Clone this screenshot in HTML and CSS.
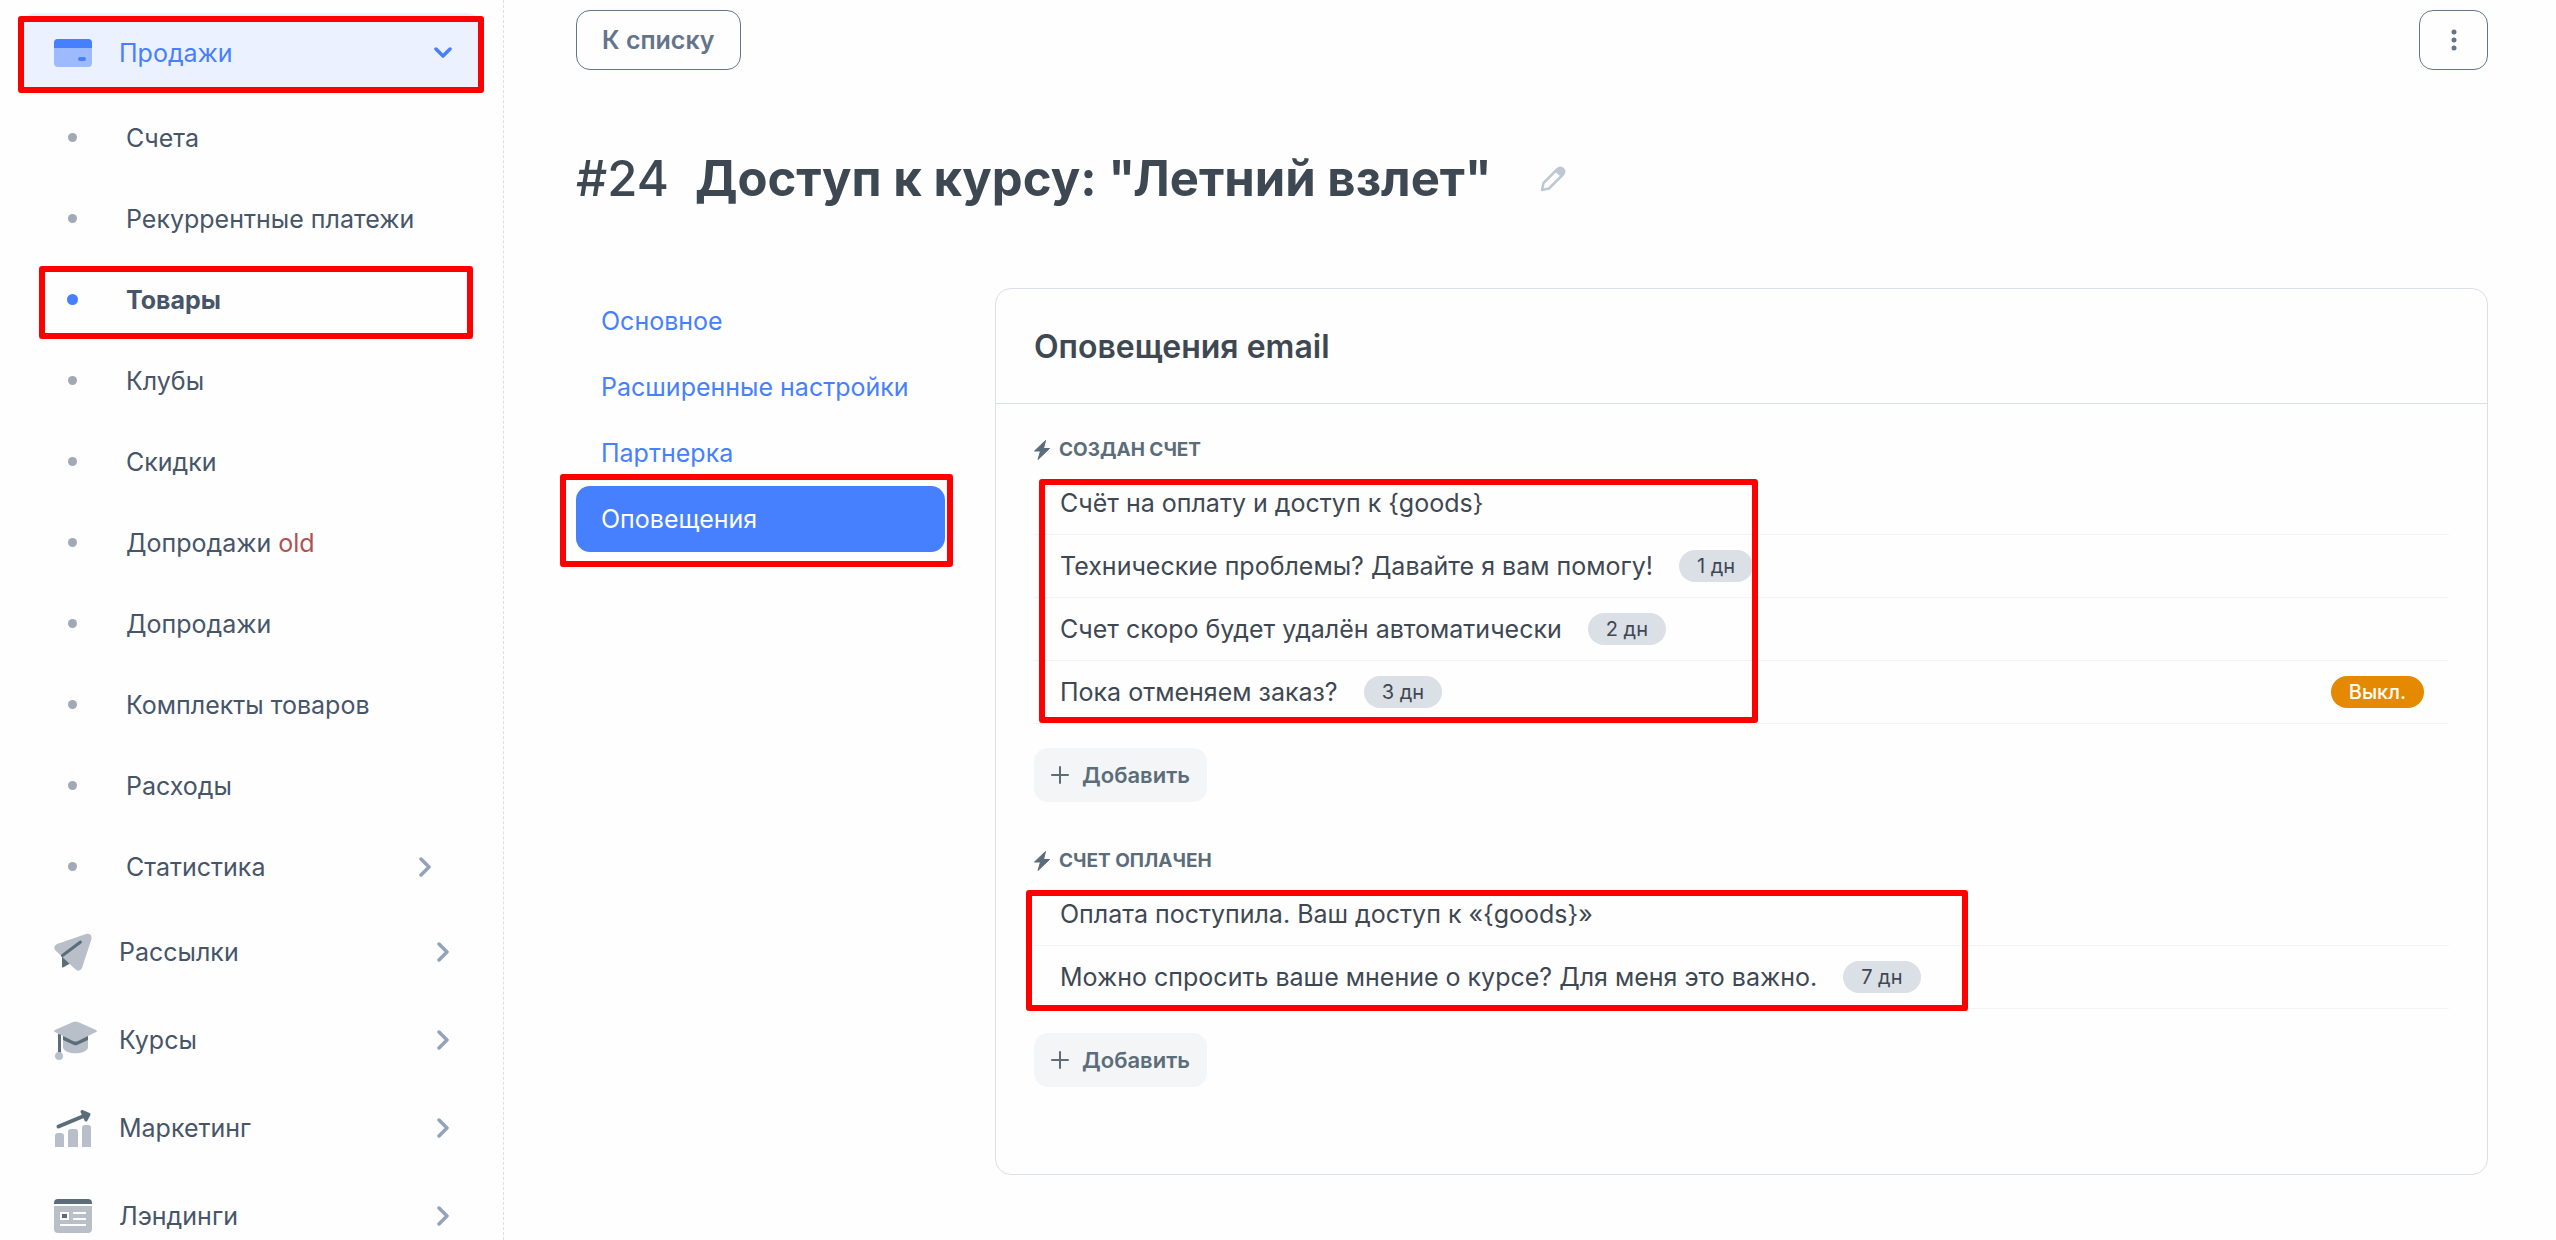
FILE: index.html
```html
<!DOCTYPE html>
<html lang="ru">
<head>
<meta charset="utf-8">
<meta name="viewport" content="width=device-width, initial-scale=1">
<title>Доступ к курсу: "Летний взлет"</title>
<link rel="stylesheet" href="styles.css">
</head>
<body>
<svg class="defs" aria-hidden="true">
  <symbol id="chevron" viewBox="0 0 12 20"><path d="M2 2l8 8-8 8" fill="none" stroke="currentColor" stroke-width="3.500" stroke-linecap="round" stroke-linejoin="round"/></symbol>
  <symbol id="bolt" viewBox="0 0 16 20"><path d="M11.500 0.500L0.500 11H6.500L4 19.500L15.500 8.500H9.500Z" fill="currentColor" stroke="currentColor" stroke-linejoin="round"/></symbol>
  <symbol id="plus" viewBox="0 0 18 18"><path d="M9 1v16M1 9h16" fill="none" stroke="currentColor" stroke-width="2" stroke-linecap="round"/></symbol>
</svg>
<div class="layout">
  <nav class="sidebar">
    <a class="item item--active" href="#">
      <svg class="item__icon" viewBox="0 0 38 38"><rect y="5" width="38" height="28" rx="4" fill="#9dbaff"/><path d="M0 14V9a4 4 0 0 1 4-4h30a4 4 0 0 1 4 4v5z" fill="#4680ff"/><rect x="24" y="23" width="8" height="4" rx="2" fill="#4680ff"/></svg>
      <span class="item__label">Продажи</span>
      <svg class="chevron chevron--down" viewBox="0 0 18 12"><path d="M2 2l7 7 7-7" fill="none" stroke="currentColor" stroke-width="3.500" stroke-linecap="round" stroke-linejoin="round"/></svg>
      <span class="mark mark--sales"></span>
    </a>
    <ul class="submenu">
      <li><a class="sub" href="#"><span class="dot"></span>Счета</a></li>
      <li><a class="sub" href="#"><span class="dot"></span>Рекуррентные платежи</a></li>
      <li><a class="sub sub--active" href="#"><span class="dot"></span>Товары<span class="mark mark--goods"></span></a></li>
      <li><a class="sub" href="#"><span class="dot"></span>Клубы</a></li>
      <li><a class="sub" href="#"><span class="dot"></span>Скидки</a></li>
      <li><a class="sub" href="#"><span class="dot"></span><span>Допродажи <span class="old">old</span></span></a></li>
      <li><a class="sub" href="#"><span class="dot"></span>Допродажи</a></li>
      <li><a class="sub" href="#"><span class="dot"></span>Комплекты товаров</a></li>
      <li><a class="sub" href="#"><span class="dot"></span>Расходы</a></li>
      <li><a class="sub" href="#"><span class="dot"></span>Статистика<svg class="chevron"><use href="#chevron"/></svg></a></li>
    </ul>
    <a class="item" href="#">
      <svg class="item__icon" viewBox="0 0 38 38"><path d="M8 21v12.500q0 1.500 1.500 .8L17 30z" fill="#5b6d79"/><path d="M3 11L32 1q6-1 5.500 5L28 35q-3 5-7 1L2 18q-4-4 1-7z" fill="#b8bfc9"/><path d="M8.500 22.500L26.500 9" stroke="#5b6d79" stroke-width="3" stroke-linecap="round"/></svg>
      <span class="item__label">Рассылки</span>
      <svg class="chevron"><use href="#chevron"/></svg>
    </a>
    <a class="item" href="#">
      <svg class="item__icon" viewBox="0 0 38 38"><path d="M9 14v13c3 7 22 7 25 0V14z" fill="#b8bfc9"/><path d="M9 15v4l11 5q1.500 .7 3 0L34 19v-4z" fill="#5b6d79"/><path d="M5.500 13v19" stroke="#5b6d79" stroke-width="3"/><circle cx="5" cy="35" r="4" fill="#b8bfc9"/><path d="M1 9L19 1q2.500-1 5 0L42 9q2 1 0 2L24 20q-2.500 1-5 0L1 11q-2-1 0-2z" fill="#b8bfc9"/></svg>
      <span class="item__label">Курсы</span>
      <svg class="chevron"><use href="#chevron"/></svg>
    </a>
    <a class="item" href="#">
      <svg class="item__icon" viewBox="0 0 38 38"><path d="M1 38V27q0-3 3-3h3q3 0 3 3v11zM14 38V23q0-3 3-3h4q3 0 3 3v15zM28 38V19q0-3 3-3h3q3 0 3 3v19z" fill="#b8bfc9"/><path d="M4.500 17.500L31 6.500" stroke="#5b6d79" stroke-width="4" stroke-linecap="round"/><path d="M28 2.500L35 5.500L32 11Z" fill="#5b6d79" stroke="#5b6d79" stroke-width="3" stroke-linejoin="round"/></svg>
      <span class="item__label">Маркетинг</span>
      <svg class="chevron"><use href="#chevron"/></svg>
    </a>
    <a class="item" href="#">
      <svg class="item__icon" viewBox="0 0 38 38"><path d="M0 7V6a4 4 0 0 1 4-4h30a4 4 0 0 1 4 4v1z" fill="#5b6d79"/><path d="M0 9h38v23a4 4 0 0 1-4 4H4a4 4 0 0 1-4-4z" fill="#b8bfc9"/><rect x="7" y="16" width="7" height="6" fill="#5b6d79" stroke="#fff" stroke-width="2"/><path d="M19 16h13M19 22h13M6 28h26" stroke="#fff" stroke-width="2"/></svg>
      <span class="item__label">Лэндинги</span>
      <svg class="chevron"><use href="#chevron"/></svg>
    </a>
  </nav>

  <main class="main">
    <div class="toolbar">
      <button class="btn" type="button">К списку</button>
      <button class="btn btn--more" type="button" aria-label="Ещё"><svg viewBox="0 0 6 22"><g fill="currentColor"><circle cx="3" cy="3" r="2.500"/><circle cx="3" cy="11" r="2.500"/><circle cx="3" cy="19" r="2.500"/></g></svg></button>
    </div>
    <h1 class="title">
      <span class="title__id">#24</span>
      <span>Доступ к курсу: "Летний взлет"</span>
      <button class="edit" type="button" aria-label="Изменить"><svg viewBox="0 0 26 26"><path d="M2 24l1.500-7L17.500 3q3-2.500 5.500 0t0 5.500L9 22.500z" fill="none" stroke="currentColor" stroke-width="2.500" stroke-linejoin="round"/><path d="M15 5.500L18 2.500q3-2 5.500 .5t.5 5.500L21 11z" fill="currentColor"/></svg></button>
    </h1>
    <div class="columns">
      <nav class="tabs">
        <a class="tab" href="#">Основное</a>
        <a class="tab" href="#">Расширенные настройки</a>
        <a class="tab" href="#">Партнерка</a>
        <a class="tab tab--active" href="#">Оповещения<span class="mark mark--tab"></span></a>
      </nav>
      <section class="card">
        <h2 class="card__title">Оповещения email</h2>
        <div class="card__body">
          <section class="group">
            <h3 class="group__title"><svg class="bolt"><use href="#bolt"/></svg>Создан счет</h3>
            <ul class="rows">
              <li class="row"><a href="#">Счёт на оплату и доступ к {goods}</a></li>
              <li class="row"><a href="#">Технические проблемы? Давайте я вам помогу!</a><span class="badge">1 дн</span></li>
              <li class="row"><a href="#">Счет скоро будет удалён автоматически</a><span class="badge">2 дн</span></li>
              <li class="row"><a href="#">Пока отменяем заказ?</a><span class="badge">3 дн</span><span class="badge badge--off">Выкл.</span></li>
              <li class="mark mark--created" aria-hidden="true"></li>
            </ul>
            <button class="add" type="button"><svg class="plus"><use href="#plus"/></svg>Добавить</button>
          </section>
          <section class="group">
            <h3 class="group__title"><svg class="bolt"><use href="#bolt"/></svg>Счет оплачен</h3>
            <ul class="rows">
              <li class="row"><a href="#">Оплата поступила. Ваш доступ к «{goods}»</a></li>
              <li class="row"><a href="#">Можно спросить ваше мнение о курсе? Для меня это важно.</a><span class="badge">7 дн</span></li>
              <li class="mark mark--paid" aria-hidden="true"></li>
            </ul>
            <button class="add" type="button"><svg class="plus"><use href="#plus"/></svg>Добавить</button>
          </section>
        </div>
      </section>
    </div>
  </main>
</div>
</body>
</html>
```
FILE: styles.css
```css
* {
  box-sizing: border-box;
}

body {
  margin: 0;
  background: #fefefe;
  color: #3e4853;
  font: 400 25px/32px Inter, "Noto Sans", sans-serif;
}

h1, h2, h3, ul {
  margin: 0;
  padding: 0;
}

ul {
  list-style: none;
}

a {
  color: inherit;
  text-decoration: none;
}

button {
  font: inherit;
  cursor: pointer;
}

.defs {
  display: none;
}

.layout {
  display: flex;
  height: 100vh;
  overflow: hidden;
}

/* Sidebar */
.sidebar {
  flex: none;
  width: 504px;
  padding: 13px 20px 0;
  border-right: 1px dashed #dbe0e5;
  color: #475569;
}

.item {
  position: relative;
  display: flex;
  align-items: center;
  height: 80px;
  margin-bottom: 8px;
  padding: 0 34px;
  border-radius: 16px;
}

.item--active {
  margin-bottom: 4px;
  background: #ebf1ff;
  color: #4680ff;
}

.item__icon {
  width: 38px;
  height: 38px;
  margin-right: 27px;
  overflow: visible;
}

.chevron {
  width: 12px;
  height: 20px;
  margin-left: auto;
  color: #93a3bb;
}

.chevron--down {
  width: 18px;
  height: 12px;
  margin-right: -3px;
  color: #4680ff;
}

.submenu {
  margin-bottom: 5px;
}

.sub {
  position: relative;
  display: flex;
  align-items: center;
  height: 81px;
  padding: 0 52px 0 48px;
}

.sub--active {
  font-weight: 700;
}

.dot {
  width: 9px;
  height: 9px;
  margin-right: 49px;
  border-radius: 50%;
  background: #a1a8b6;
}

.sub--active .dot {
  width: 11px;
  height: 11px;
  margin-right: 48px;
  margin-left: -1px;
  background: #4680ff;
}

.old {
  color: #ad5353;
}

/* Main */
.main {
  flex: 1;
  min-width: 0;
  padding: 10px 68px 0 72px;
}

.toolbar {
  display: flex;
  justify-content: space-between;
}

.btn {
  height: 60px;
  padding: 0 25px;
  border: 1px solid #64748b;
  border-radius: 14px;
  background: transparent;
  color: #64748b;
  font-weight: 600;
}

.btn--more {
  display: flex;
  align-items: center;
  justify-content: center;
  width: 69px;
  padding: 0;
}

.btn--more svg {
  width: 6px;
  height: 22px;
}

.title {
  display: flex;
  align-items: center;
  gap: 26px;
  margin-top: 77px;
  font-size: 49px;
  line-height: 64px;
  font-weight: 700;
}

.title__id {
  font-weight: 500;
}

.edit {
  width: 26px;
  height: 26px;
  margin-left: 22px;
  padding: 0;
  border: 0;
  background: none;
  color: #bec8d2;
}

.edit svg {
  display: block;
}

.columns {
  display: grid;
  grid-template-columns: 369px 1fr;
  gap: 50px;
  align-items: start;
  margin-top: 77px;
}

.tab {
  position: relative;
  display: flex;
  align-items: center;
  height: 66px;
  padding: 0 25px;
  border-radius: 14px;
  color: #4680ff;
  white-space: nowrap;
}

.tab--active {
  background: #4680ff;
  color: #fff;
}

.card {
  border: 1px solid #dbdfe6;
  border-radius: 16px;
}

.card__title {
  padding: 38px 38px 36px;
  border-bottom: 1px solid #dbdfe6;
  font-size: 32px;
  line-height: 40px;
  font-weight: 600;
}

.card__body {
  padding: 34px 38px 40px;
}

.group {
  padding-bottom: 47px;
}

.group__title {
  display: flex;
  align-items: center;
  gap: 9px;
  color: #5b6d79;
  font-size: 19px;
  line-height: 24px;
  font-weight: 700;
  text-transform: uppercase;
}

.bolt {
  width: 16px;
  height: 20px;
}

.rows {
  position: relative;
  padding-top: 10px;
}

.row {
  display: flex;
  align-items: center;
  gap: 26px;
  height: 63px;
  padding: 0 25px 0 26px;
  border-bottom: 1px solid #f3f4f6;
}

.badge {
  padding: 4px 18px;
  border-radius: 16px;
  background: #dbdfe6;
  font-size: 20px;
  line-height: 24px;
}

.badge--off {
  margin-left: auto;
  background: #e58a00;
  color: #fff;
  font-weight: 500;
}

.add {
  display: flex;
  align-items: center;
  gap: 13px;
  height: 54px;
  margin-top: 24px;
  padding: 0 17px;
  border: 0;
  border-radius: 14px;
  background: #f3f5f7;
  color: #5b6d79;
  font-size: 22px;
  font-weight: 600;
}

.plus {
  width: 18px;
  height: 18px;
}

/* Red highlight frames laid over the highlighted blocks */
.mark {
  position: absolute;
  border: 6px solid #f00;
  border-radius: 3px;
  pointer-events: none;
}

.mark--sales {
  inset: 3px -1px 0 -2px;
}

.mark--goods {
  inset: 7px 10px 1px 19px;
}

.mark--tab {
  inset: -12px -8px -15px -16px;
}

.mark--created {
  inset: 17px auto 1px 5px;
  width: 719px;
}

.mark--paid {
  inset: 17px auto -2px -8px;
  width: 942px;
}
```
